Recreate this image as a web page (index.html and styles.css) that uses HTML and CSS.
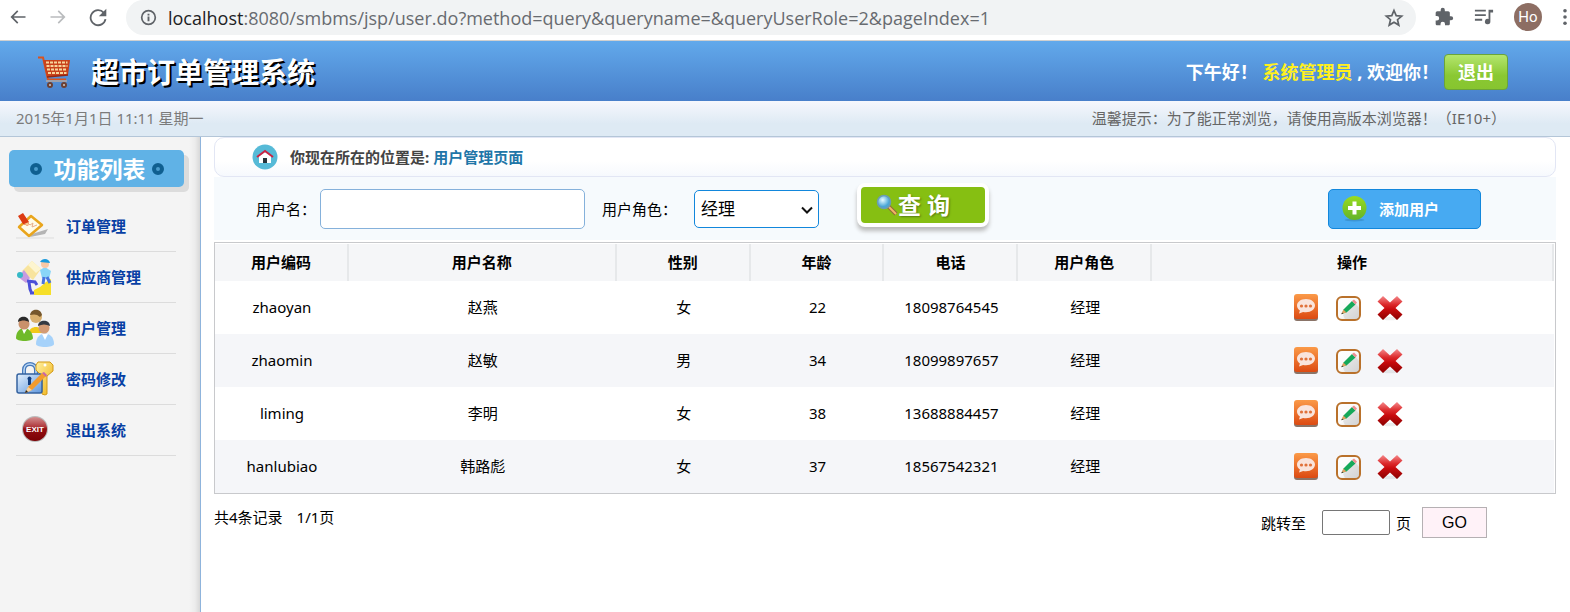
FILE: index.html
```html
<!DOCTYPE html>
<html lang="zh-CN">
<head>
<meta charset="utf-8">
<title>超市订单管理系统</title>
<link rel="stylesheet" href="styles.css">
</head>
<body>
<svg class="sprite" aria-hidden="true">
  <defs>
    <linearGradient id="g-orange" x1="0" y1="0" x2="0" y2="1"><stop offset="0" stop-color="#fb9a48"/><stop offset="1" stop-color="#dc4a12"/></linearGradient>
    <linearGradient id="g-red" x1="0" y1="0" x2="0" y2="1"><stop offset="0" stop-color="#f5898b"/><stop offset=".35" stop-color="#dc2a2c"/><stop offset=".55" stop-color="#c90b0e"/><stop offset="1" stop-color="#8a0000"/></linearGradient>
    <linearGradient id="g-paper" x1="0" y1="0" x2="1" y2="1"><stop offset="0" stop-color="#fff"/><stop offset=".5" stop-color="#fafafa"/><stop offset="1" stop-color="#d8d8d8"/></linearGradient>
    <linearGradient id="g-lock" x1="0" y1="0" x2="1" y2="1"><stop offset="0" stop-color="#e3f0fd"/><stop offset="1" stop-color="#5f97dd"/></linearGradient>
    <linearGradient id="g-key" x1="0" y1="0" x2="1" y2="1"><stop offset="0" stop-color="#fff0a0"/><stop offset="1" stop-color="#efb012"/></linearGradient>
    <linearGradient id="g-plus" x1="0" y1="0" x2="0" y2="1"><stop offset="0" stop-color="#99dc20"/><stop offset="1" stop-color="#63b32a"/></linearGradient>
    <linearGradient id="g-exit" x1="0" y1="0" x2="0" y2="1"><stop offset="0" stop-color="#d49090"/><stop offset=".4" stop-color="#b03a3e"/><stop offset=".5" stop-color="#930f12"/><stop offset="1" stop-color="#7a0004"/></linearGradient>
    <radialGradient id="g-lens" cx=".4" cy=".35"><stop offset="0" stop-color="#e6fbff"/><stop offset="1" stop-color="#4aa6d6"/></radialGradient>
  </defs>
  <symbol id="i-view" viewBox="0 0 26 27">
    <rect x="1" y="3" width="24" height="24" rx="3" fill="#8a7468"/>
    <rect x="1" y="0" width="24" height="25" rx="3" fill="url(#g-orange)"/>
    <path d="M13 5c5.300 0 9 2.900 9 6.600s-3.700 6.700-9 6.700c-1 0-2-.1-2.900-.4L6 19.500l.9-3C5.100 15.300 4 13.600 4 11.600 4 7.900 7.700 5 13 5z" fill="#f9e4dc"/>
    <circle cx="8.500" cy="12" r="1.600" fill="#e0713a"/><circle cx="13" cy="12" r="1.600" fill="#e0713a"/><circle cx="17.500" cy="12" r="1.600" fill="#e0713a"/>
  </symbol>
  <symbol id="i-edit" viewBox="0 0 26 27">
    <rect x="2" y="3" width="23" height="23" rx="5" fill="url(#g-paper)" stroke="#b9712b" stroke-width="2"/>
    <path d="M8 21l13-11 3 4v9l-3 2H10z" fill="#ccc" opacity=".5"/>
    <path d="M17 7l3.500 3.500-9 8-4.500 1.500 1.500-4.500z" fill="#16a95a"/>
    <path d="M17 7l2-1.500 3 3-1.500 2z" fill="#ee8f92"/>
    <path d="M8.300 15.500l3.200 3L6.500 20z" fill="#e0a060"/>
    <path d="M6.300 20.300l.7-1.900 1.200 1.300z" fill="#333"/>
  </symbol>
  <symbol id="i-delete" viewBox="0 0 26 27">
    <ellipse cx="13" cy="24.500" rx="9" ry="1.800" fill="#000" opacity=".07"/>
    <path d="M6 2l7 6.500L20 2l5.500 5.500-7 6.500 7 6.500L20 26l-7-6.500L6 26 .5 20.500l7-6.500-7-6.500z" fill="url(#g-red)"/>
  </symbol>
</svg>

<div class="chrome">
  <button class="chrome-btn" aria-label="后退"><svg viewBox="0 0 24 24"><path d="M21 11H6.800l5.600-5.600L11 4l-8 8 8 8 1.400-1.400L6.800 13H21z" fill="#5f6368"/></svg></button>
  <button class="chrome-btn" aria-label="前进"><svg viewBox="0 0 24 24"><path d="M3 11h14.200l-5.600-5.600L13 4l8 8-8 8-1.400-1.400 5.600-5.600H3z" fill="#babcbe"/></svg></button>
  <button class="chrome-btn" aria-label="刷新"><svg viewBox="0 0 24 24"><path d="M19 7A9 9 0 1 0 21 14.500" fill="none" stroke="#5f6368" stroke-width="2.200"/><path d="M22 2v9h-9z" fill="#5f6368"/></svg></button>
  <div class="address">
    <svg class="info" viewBox="0 0 18 18"><circle cx="9" cy="9" r="7.200" fill="none" stroke="#5f6368" stroke-width="1.800"/><path d="M8 8h2v5H8zM8 5h2v2H8z" fill="#5f6368"/></svg>
    <span class="url"><span class="host">localhost</span>:8080/smbms/jsp/user.do?method=query&amp;queryname=&amp;queryUserRole=2&amp;pageIndex=1</span>
    <svg class="star" viewBox="0 0 20 20"><path d="M10 2.500l2.200 5.100 5.500.5-4.200 3.600 1.300 5.400-4.800-2.900-4.800 2.900 1.300-5.400L2.300 8.100l5.500-.5z" fill="none" stroke="#5f6368" stroke-width="1.700"/></svg>
  </div>
  <div class="tools">
    <svg class="tool" viewBox="0 0 24 24"><path d="M20.500 11H19V7c0-1.100-.9-2-2-2h-4V3.500a2.500 2.500 0 0 0-5 0V5H4a2 2 0 0 0-2 2v3.800h1.500a2.700 2.700 0 0 1 0 5.400H2V20c0 1.100.9 2 2 2h3.800v-1.500a2.700 2.700 0 0 1 5.400 0V22H17c1.100 0 2-.9 2-2v-4h1.500a2.500 2.500 0 0 0 0-5z" fill="#5f6368"/></svg>
    <svg class="tool" viewBox="0 0 22 20"><path d="M1 3h12M1 8h12M1 13h8" stroke="#5f6368" stroke-width="2"/><path d="M15 2h6v3h-3v10a3 3 0 1 1-2-2.800V2z" fill="#5f6368"/></svg>
    <span class="avatar">Ho</span>
    <svg class="dots" viewBox="0 0 6 20"><circle cx="3" cy="3" r="2" fill="#5f6368"/><circle cx="3" cy="10" r="2" fill="#5f6368"/><circle cx="3" cy="17" r="2" fill="#5f6368"/></svg>
  </div>
</div>

<header class="top">
  <svg class="cart" viewBox="0 0 34 34">
    <path d="M1 2.500h5l5 22h18" fill="none" stroke="#d9531e" stroke-width="2"/>
    <path d="M6 5h27l-2 15-21 2z" fill="#c8421b"/>
    <path d="M9 7.500h21.500M9.500 11h21M10 14.500h20M11 18h18.500" stroke="#f8d59c" stroke-width="2" stroke-dasharray="3 1"/>
    <path d="M10 22l21-2" stroke="#96260f" stroke-width="1.500"/>
    <path d="M9 26h21" stroke="#9ca0ad" stroke-width="2"/>
    <circle cx="13" cy="30" r="3" fill="#6d4033"/><circle cx="27" cy="30" r="3" fill="#6d4033"/><circle cx="13" cy="30" r="1" fill="#ccc"/><circle cx="27" cy="30" r="1" fill="#ccc"/>
  </svg>
  <h1>超市订单管理系统</h1>
  <p class="greet">下午好！ <span class="who">系统管理员</span> , 欢迎你！</p>
  <a class="logout" href="#">退出</a>
</header>
<div class="notice"><span>2015年1月1日 11:11 星期一</span><span>温馨提示：为了能正常浏览，请使用高版本浏览器！（IE10+）</span></div>

<div class="body">
  <nav class="side">
    <h2><i></i>功能列表<i></i></h2>
    <ul>
      <li><a href="#"><svg viewBox="0 0 38 38">
        <path d="M16 27l16-5-3 5-15 3z" fill="#888" opacity=".6"/>
        <path d="M3 20L15 9l11 9-13 11z" fill="#fffbe8" stroke="#e9a51c" stroke-width="2.500" stroke-linejoin="round"/>
        <path d="M11 15l3 3 3-2-1 4 5-2" fill="none" stroke="#e6ae8a" stroke-width="1"/>
        <path d="M2 9l5-3 6 9-1 4-5-2z" fill="#dc3a12"/><path d="M8 17l4 2 1-4z" fill="#f5c892"/>
        <path d="M0 31h38" stroke="#ddd"/>
      </svg>订单管理</a></li>
      <li><a href="#"><svg viewBox="0 0 38 38">
        <path d="M18 37v-5l6-3 6-5 5-3v16z" fill="#f6df29"/>
        <path d="M6 13L16 3l9 8-8 11z" fill="#f8e49d"/><path d="M16 3l9 8-5 4-8-8z" fill="#fdf5d0"/>
        <path d="M2 19l6-7 6 8-4 5z" fill="#c69be0"/><circle cx="4" cy="17" r="3" fill="#35b9c6"/>
        <path d="M11 23l8 1 2 3M13 24l1 7 2 5M14 35h4" fill="none" stroke="#4b50d8" stroke-width="3"/>
        <path d="M24 12l5-3 6 4-2 8-7-1z" fill="#89d5f8"/>
        <path d="M28 19l-1 7M31 19l3 6" fill="none" stroke="#4773df" stroke-width="3"/>
        <circle cx="29" cy="6" r="4" fill="#f8c8a5"/><path d="M24 4c2-4 9-4 10 1z" fill="#1a9adc"/>
      </svg>供应商管理</a></li>
      <li><a href="#"><svg viewBox="0 0 38 38">
        <path d="M13 24c0-8 14-8 13 0z" fill="#f1c918"/><circle cx="20" cy="8" r="6" fill="#d9b06e"/><path d="M14 6c1-7 11-7 12 0l-2 2c-3-3-6-3-10-2z" fill="#75572c"/>
        <path d="M0 29c0-13 16-13 17 0 0 4-17 4-17 0z" fill="#6fba29"/><path d="M6 20l2 5 3-5z" fill="#fff"/><circle cx="8" cy="15" r="5.500" fill="#c9916b"/><path d="M2 13c0-7 11-7 11 0-4-2-7-2-11 0z" fill="#292929"/>
        <path d="M20 35c0-14 18-14 18 0 0 4-18 4-18 0z" fill="#a6d2fa"/><path d="M26 25l3 6 3-6z" fill="#fff"/><circle cx="28" cy="19" r="5.500" fill="#d49b74"/><path d="M22 17c0-7 12-7 12 0-4-2-8-2-12 0z" fill="#343a42"/>
      </svg>用户管理</a></li>
      <li><a href="#"><svg viewBox="0 0 38 38">
        <path d="M8 15V10c0-8 12-8 12 0v5" fill="none" stroke="#4679bb" stroke-width="4"/><path d="M8 15V10c0-8 12-8 12 0v5" fill="none" stroke="#bdd9f5" stroke-width="1.500"/>
        <path d="M22 2h12l3 3v6l-6 5v18l-2 1-3-1V16l-6-6V5z" fill="url(#g-key)" stroke="#d39a18"/>
        <circle cx="29" cy="5" r="1.500" fill="#fff"/>
        <rect x="1" y="14" width="25" height="19" rx="2" fill="url(#g-lock)" stroke="#34629f" stroke-width="1.500"/>
        <path d="M12 20a2 2 0 1 1 3 0v5h-3z" fill="#123e80"/>
        <path d="M9 33l3-6 14-14 4 3-14 14z" fill="#f39b2d"/><path d="M26 13l2-1 3 3-1 2z" fill="#c865a8"/><path d="M9 33l3-6 4 3z" fill="#f6d3a0"/><path d="M9 33l1-3 2 2z" fill="#222"/>
      </svg>密码修改</a></li>
      <li><a href="#"><svg viewBox="0 0 38 38">
        <circle cx="19" cy="18" r="13" fill="#bbb"/><circle cx="19" cy="18" r="12" fill="url(#g-exit)"/>
        <text class="exit" x="19" y="21" text-anchor="middle">EXIT</text>
      </svg>退出系统</a></li>
    </ul>
  </nav>

  <main>
    <div class="crumb">
      <svg viewBox="0 0 26 26"><circle cx="13" cy="13" r="12.500" fill="#56bad7"/><path d="M7 12l6-4 6 4v7H7z" fill="#fff"/><path d="M5 13l8-6 8 6" fill="none" stroke="#cb2443" stroke-width="2"/><path d="M11 14h4v5h-4z" fill="#263238"/></svg>
      <strong>你现在所在的位置是: <span>用户管理页面</span></strong>
    </div>
    <form class="search">
      <label for="uname">用户名：</label>
      <input id="uname" type="text">
      <label for="role">用户角色：</label>
      <div class="pick">
        <select id="role"><option>经理</option></select>
        <svg viewBox="0 0 12 8"><path d="M1 1.500l5 5 5-5" fill="none" stroke="#111" stroke-width="2"/></svg>
      </div>
      <button class="query" type="button"><svg viewBox="0 0 22 22"><path d="M12 12l8 8" stroke="#8f6b3a" stroke-width="4"/><path d="M13 13l7 7" stroke="#f3b565" stroke-width="2"/><circle cx="8" cy="8" r="6.500" fill="url(#g-lens)" stroke="#6a9cb4" stroke-width="1.500"/></svg>查 询</button>
      <a class="add" href="#"><svg viewBox="0 0 25 26"><ellipse cx="12.500" cy="24" rx="10" ry="1.500" fill="#2a6c9c" opacity=".35"/><circle cx="12.500" cy="12" r="12" fill="url(#g-plus)"/><path d="M12.500 5.500v13M6 12h13" stroke="#fff" stroke-width="4"/></svg>添加用户</a>
    </form>
    <div class="grid">
      <table>
        <colgroup><col class="c1"><col class="c2"><col class="c1"><col class="c1"><col class="c1"><col class="c1"><col class="c3"></colgroup>
        <thead><tr><th>用户编码</th><th>用户名称</th><th>性别</th><th>年龄</th><th>电话</th><th>用户角色</th><th>操作</th></tr></thead>
        <tbody>
          <tr><td>zhaoyan</td><td>赵燕</td><td>女</td><td>22</td><td>18098764545</td><td>经理</td><td><div class="ops"><a href="#" aria-label="查看"><svg><use href="#i-view"/></svg></a><a href="#" aria-label="修改"><svg><use href="#i-edit"/></svg></a><a href="#" aria-label="删除"><svg><use href="#i-delete"/></svg></a></div></td></tr>
          <tr><td>zhaomin</td><td>赵敏</td><td>男</td><td>34</td><td>18099897657</td><td>经理</td><td><div class="ops"><a href="#" aria-label="查看"><svg><use href="#i-view"/></svg></a><a href="#" aria-label="修改"><svg><use href="#i-edit"/></svg></a><a href="#" aria-label="删除"><svg><use href="#i-delete"/></svg></a></div></td></tr>
          <tr><td>liming</td><td>李明</td><td>女</td><td>38</td><td>13688884457</td><td>经理</td><td><div class="ops"><a href="#" aria-label="查看"><svg><use href="#i-view"/></svg></a><a href="#" aria-label="修改"><svg><use href="#i-edit"/></svg></a><a href="#" aria-label="删除"><svg><use href="#i-delete"/></svg></a></div></td></tr>
          <tr><td>hanlubiao</td><td>韩路彪</td><td>女</td><td>37</td><td>18567542321</td><td>经理</td><td><div class="ops"><a href="#" aria-label="查看"><svg><use href="#i-view"/></svg></a><a href="#" aria-label="修改"><svg><use href="#i-edit"/></svg></a><a href="#" aria-label="删除"><svg><use href="#i-delete"/></svg></a></div></td></tr>
        </tbody>
      </table>
    </div>
    <div class="pager">
      <div class="count"><span>共4条记录</span><span>1/1页</span></div>
      <form class="jump"><label for="page">跳转至</label><input id="page" type="text"><span>页</span><button type="button">GO</button></form>
    </div>
  </main>
</div>
</body>
</html>
```
FILE: styles.css
```css
* { box-sizing: border-box; }
body {
  margin: 0;
  min-height: 100vh;
  display: flex;
  flex-direction: column;
  background: #fff;
  color: #000;
  font: 15px/20px "Noto Sans", "Noto Sans CJK SC", sans-serif;
}
h1, h2, p, ul { margin: 0; padding: 0; }
ul { list-style: none; }
a { text-decoration: none; }
svg { display: block; flex: none; }
button, input, select { font: inherit; color: inherit; margin: 0; }
.sprite { position: absolute; width: 0; height: 0; }

/* browser bar */
.chrome {
  display: flex;
  align-items: flex-start;
  height: 41px;
  padding-left: 8px;
  border-bottom: 1px solid #d0d0d0;
}
.chrome-btn { width: 20px; height: 34px; margin-right: 20px; padding: 0; border: 0; background: none; }
.chrome-btn svg { width: 20px; height: 20px; }
.address {
  flex: 1;
  display: flex;
  align-items: center;
  height: 35px;
  margin-right: 18px;
  margin-left: -2px;
  padding: 0 12px 0 14px;
  border-radius: 18px;
  background: #f1f3f4;
}
.info { width: 17px; height: 17px; }
.url { flex: 1; margin-left: 11px; color: #686b70; font: 18px/24px "Open Sans", sans-serif; white-space: nowrap; }
.host { color: #202124; }
.star { width: 20px; height: 20px; }
.tools { display: flex; align-items: center; gap: 20px; height: 34px; padding-right: 2px; }
.tool { width: 20px; height: 20px; }
.avatar {
  width: 28px;
  height: 28px;
  border-radius: 50%;
  background: #8d6e63;
  color: #fff;
  font: 15px/28px Roboto, sans-serif;
  text-align: center;
}
.dots { width: 6px; height: 18px; }

/* page header */
.top {
  display: flex;
  align-items: center;
  height: 60px;
  padding: 1px 62px 0 37px;
  background: linear-gradient(#62a9eb, #487fca);
}
.cart { width: 34px; height: 34px; }
h1 { flex: 1; margin-left: 20px; color: #fff; font-size: 28px; line-height: 40px; text-shadow: 2px 2px 0 #000; }
.greet { color: #fff; font-size: 18px; font-weight: bold; white-space: nowrap; }
.who { color: #fff01c; }
.logout {
  margin-left: 5px;
  padding: 4px 13px;
  border: 1px solid #6aa43a;
  border-radius: 4px;
  background: linear-gradient(#b4e66e, #8ac833 60%, #87c52f);
  color: #fff;
  font-size: 18px;
  font-weight: bold;
  line-height: 26px;
}
.notice {
  display: flex;
  justify-content: space-between;
  height: 36px;
  padding: 0 64px 0 16px;
  border-bottom: 1px solid #b4c6d8;
  background: linear-gradient(#f6f7fd, #deeaf4 65%);
  color: #7b7b7b;
  line-height: 35px;
}
.notice span + span { color: #666; }

/* sidebar */
.body { flex: 1; display: flex; }
.side {
  flex: none;
  width: 201px;
  padding: 13px 16px 0 9px;
  border-right: 1px solid #8fb4dc;
  background: linear-gradient(to left, #d8d8d8, #ececec 5px, #f4f4f4 11px);
}
.side h2 {
  display: flex;
  align-items: center;
  justify-content: center;
  gap: 6px;
  height: 37px;
  border-radius: 5px;
  background: #60b2e6;
  box-shadow: 5px 5px 0 #dcdcdc;
  color: #fff;
  font-size: 23px;
}
.side i { width: 12px; height: 12px; border: 4px solid #0f5f90; border-radius: 50%; background: #4b9ccc; }
.side i:first-child { margin-right: 6px; }
.side ul { width: 160px; margin: 14px 0 0 7px; }
.side li a {
  display: flex;
  align-items: center;
  gap: 12px;
  height: 51px;
  border-bottom: 1px solid #dcdcdc;
  color: #0740a4;
  font-weight: bold;
}
.side li svg { width: 38px; height: 38px; }
.exit { fill: #fff; font: bold 8px "Liberation Sans", sans-serif; }

/* content */
main { flex: 1; min-width: 0; padding: 0 14px 0 13px; }
.crumb {
  display: flex;
  align-items: center;
  gap: 12px;
  height: 40px;
  padding-left: 37px;
  border: 1px solid #e2e6f4;
  border-radius: 10px;
  background: linear-gradient(#fff 60%, #f6f9fd);
  color: #444;
}
.crumb svg { width: 26px; height: 26px; }
.crumb span { color: #1f76a8; }
.search {
  display: flex;
  align-items: center;
  height: 63px;
  padding: 0 75px 0 42px;
  background: #f6fafd;
}
#uname {
  width: 265px;
  height: 40px;
  margin: 0 17px 0 4px;
  padding: 0 10px;
  border: 1px solid #85b1db;
  border-radius: 5px;
  background: #fff;
}
.pick { position: relative; margin-left: 17px; }
.pick svg { position: absolute; right: 6px; top: 16px; width: 12px; height: 8px; pointer-events: none; }
.pick select {
  display: block;
  width: 125px;
  height: 38px;
  padding: 0 6px;
  border: 1px solid #1287dc;
  border-radius: 5px;
  background: #fff;
  appearance: none;
  font-size: 17px;
}
.query {
  display: flex;
  align-items: center;
  width: 132px;
  height: 44px;
  margin: 0 0 7px 38px;
  padding: 0 0 0 15px;
  border: 4px solid #fff;
  border-radius: 8px;
  background: #86bf12;
  box-shadow: 0 4px 4px #bbb;
  color: #fff;
  font-size: 23px;
  font-weight: bold;
  text-shadow: 1px 1px 2px #567a10;
}
.query svg { width: 22px; height: 22px; }
.add {
  display: flex;
  align-items: center;
  gap: 12px;
  width: 153px;
  height: 40px;
  margin-left: auto;
  padding-left: 13px;
  border: 1px solid #1287dc;
  border-radius: 5px;
  background: #47aaf2;
  color: #fff;
  font-weight: bold;
}
.add svg { width: 25px; height: 26px; }
.grid { margin-top: 2px; padding: 1px 1px 0 0; border: 1px solid #c8c9cc; }
table { width: 100%; table-layout: fixed; border-collapse: separate; border-spacing: 0; }
.c1 { width: 10%; }
.c2 { width: 20%; }
.c3 { width: 30%; }
th, td { padding: 0 0 2px; text-align: center; }
th { height: 37px; border-right: 2px solid #e6e8ea; background: #f5f6f8; }
td { height: 53px; }
tbody tr:nth-child(even) { background: #f5f6f9; }
.ops { display: flex; justify-content: center; gap: 16px; padding: 2px 10px 0 0; }
.ops svg { width: 26px; height: 27px; }
.pager { display: flex; justify-content: space-between; padding: 13px 69px 0 0; }
.count { display: flex; gap: 14px; }
.jump { display: flex; align-items: center; height: 31px; }
.jump input { width: 68px; height: 25px; margin: 0 6px 0 16px; border: 1px solid #767676; border-radius: 2px; }
.jump button {
  width: 65px;
  height: 31px;
  margin-left: 11px;
  padding: 0;
  border: 1px solid #b5b0b3;
  background: #fff2f8;
  font: 16px/20px "Liberation Sans", sans-serif;
}
```
